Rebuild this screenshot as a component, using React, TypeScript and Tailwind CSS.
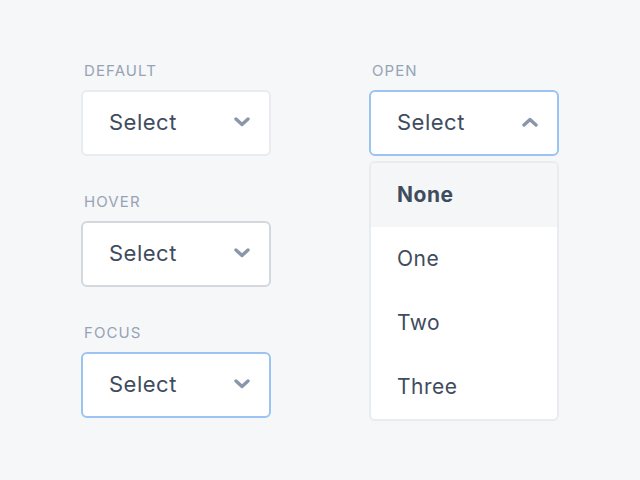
type Variant = "default" | "hover" | "focus" | "open";

const borderFor: Record<Variant, string> = {
  default: "border-[#e8ebef]",
  hover: "border-[#d3d8de]",
  focus: "border-[#9cc3f2]",
  open: "border-[#9cc3f2]",
};

function Chevron({ up }: { up?: boolean }) {
  return (
    <svg width="16" height="10" viewBox="0 0 16 10" className="text-[#8a97aa]">
      <polyline
        points={up ? "2,8 8,2.5 14,8" : "2,2 8,7.5 14,2"}
        fill="none"
        stroke="currentColor"
        strokeWidth="3.4"
        strokeLinecap="round"
        strokeLinejoin="round"
      />
    </svg>
  );
}

function SelectBox({ variant }: { variant: Variant }) {
  return (
    <div
      className={`flex h-[66px] w-[190px] items-center justify-between rounded-[6px] border-2 bg-white pb-[2px] pl-[26px] pr-[19px] ${borderFor[variant]}`}
    >
      <span className="text-[22px] tracking-[0.5px] text-[#3f4c5d]">Select</span>
      <Chevron up={variant === "open"} />
    </div>
  );
}

function Field({ label, variant }: { label: string; variant: Variant }) {
  return (
    <div className="flex flex-col">
      <div className="mb-[9px] h-5 pl-[3px] text-[15px] leading-5 tracking-[1.1px] text-[#97a3b4]">
        {label}
      </div>
      <SelectBox variant={variant} />
    </div>
  );
}

const options = ["None", "One", "Two", "Three"];

export default function App() {
  return (
    <div
      className="flex h-[480px] w-[640px] gap-[98px] bg-[#f5f7f9] pl-[81px] pt-[61px]"
      style={{ fontFamily: '"Inter", "Noto Sans", sans-serif' }}
    >
      <div className="flex flex-col gap-[36px]">
        <Field label="DEFAULT" variant="default" />
        <Field label="HOVER" variant="hover" />
        <Field label="FOCUS" variant="focus" />
      </div>
      <div className="flex flex-col">
        <Field label="OPEN" variant="open" />
        <div className="mt-[5px] w-[190px] overflow-hidden rounded-[6px] border-2 border-[#e8ebef] bg-white">
          {options.map((o, i) => (
            <div
              key={o}
              className={`flex h-[64px] items-center pl-[26px] text-[21px] tracking-[0.5px] text-[#3f4c5d] ${
                i === 0 ? "bg-[#f4f6f8] font-bold" : ""
              }`}
            >
              {o}
            </div>
          ))}
        </div>
      </div>
    </div>
  );
}
